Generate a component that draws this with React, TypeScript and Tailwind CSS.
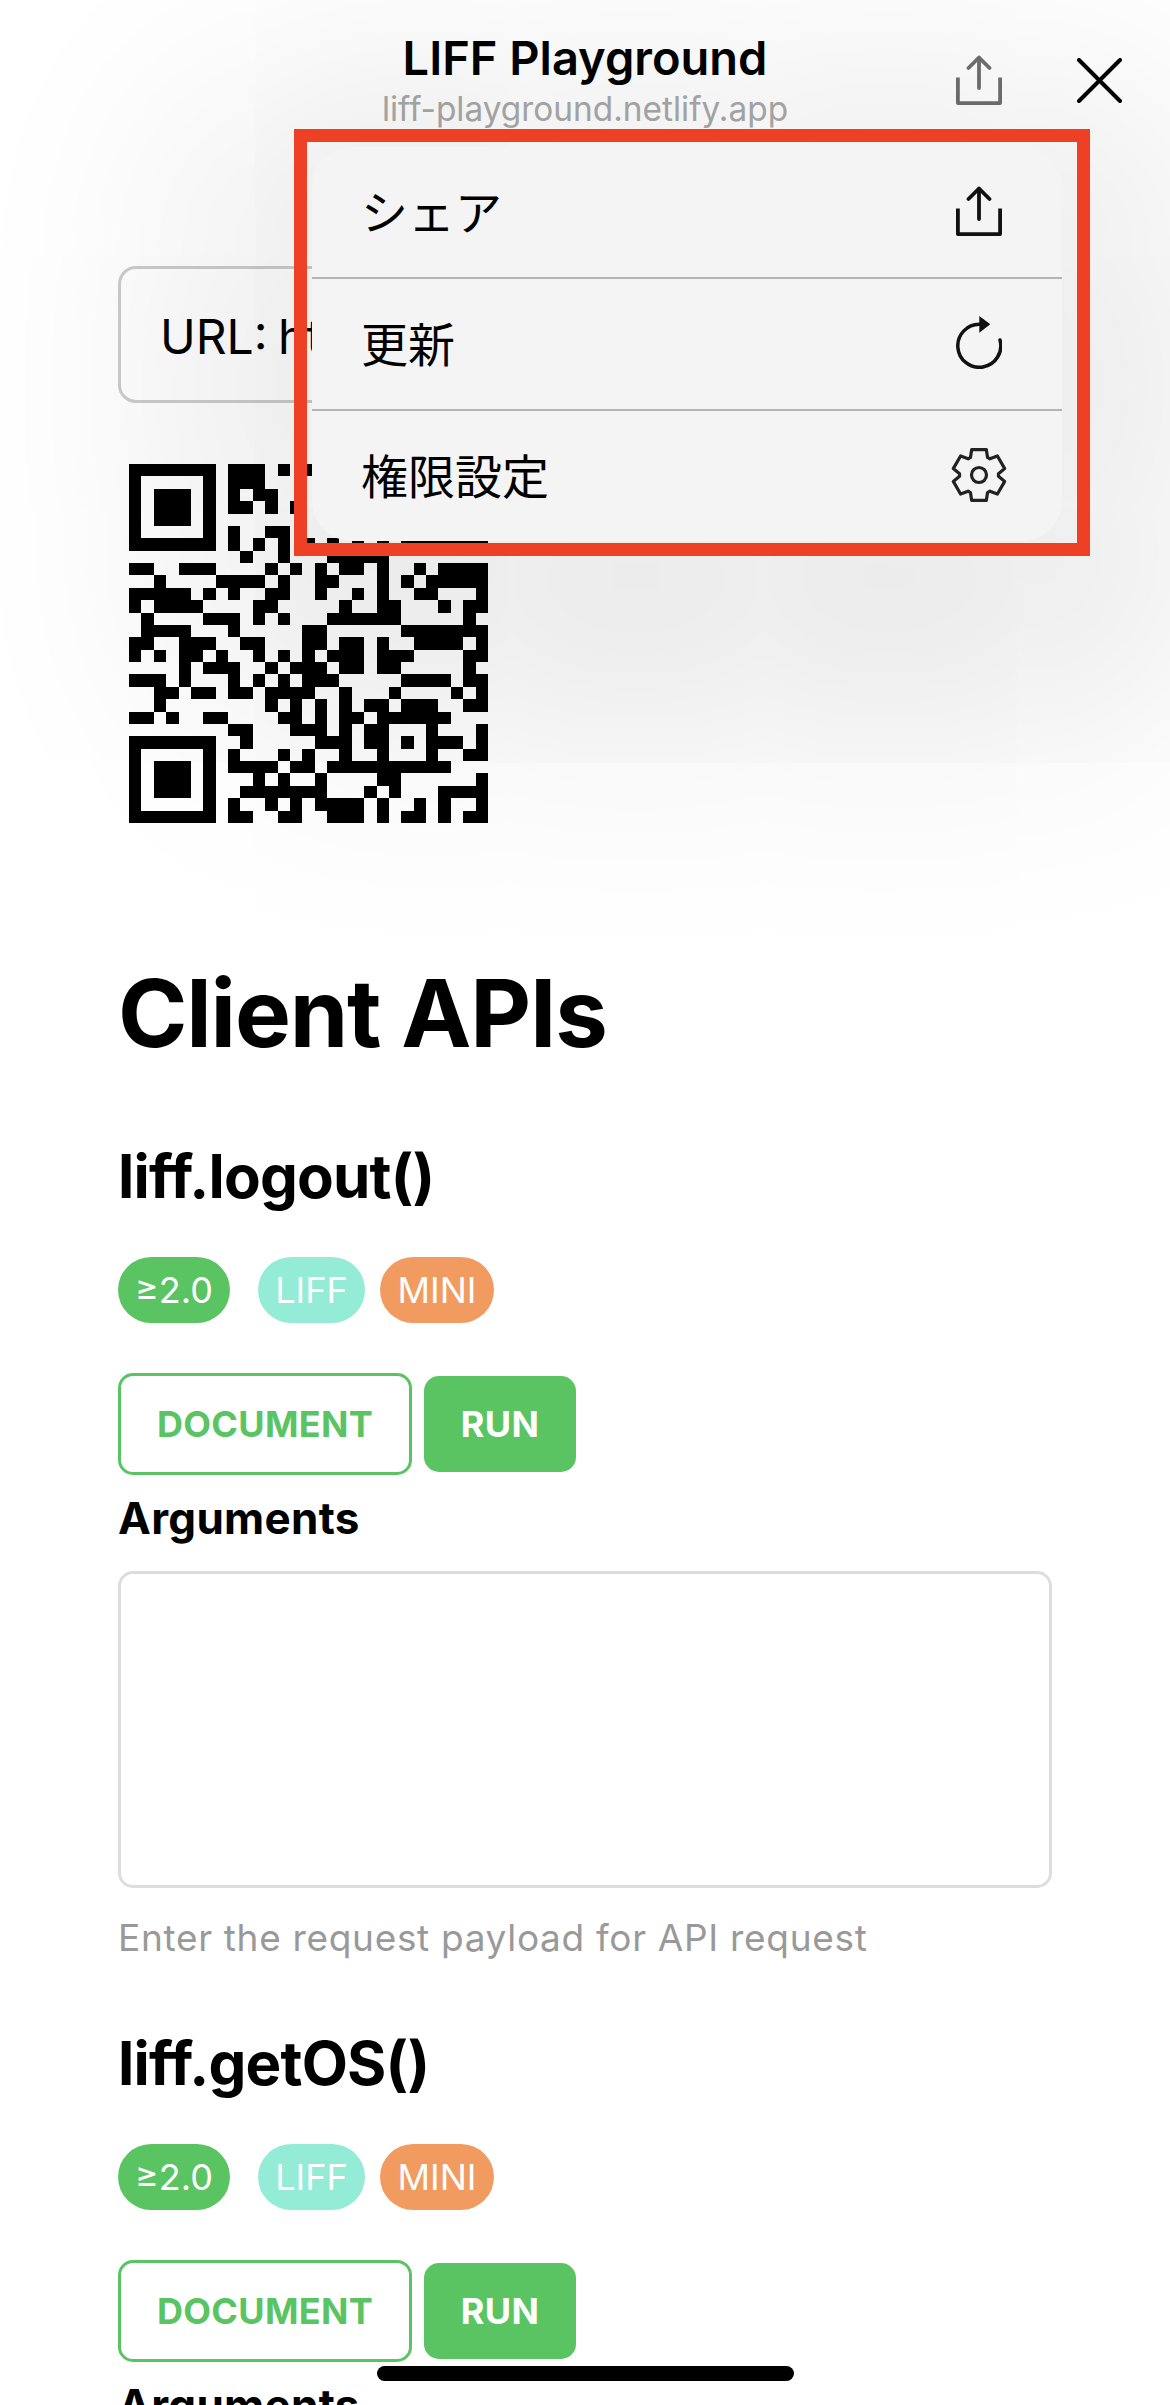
import { Fragment } from 'react';

const QR_ROWS = [
  '#######.###.#.#.......#######',
  '#.....#.###...........#.....#',
  '#.###.#.#.##..........#.###.#',
  '#.###.#.##.#.#........#.###.#',
  '#.###.#...............#.###.#',
  '#.....#.#..##.........#.....#',
  '#######.#.#.#.#.#.#.#.#######',
  '.........#..#...#####........',
  '##..###....#.#.#.##.#..#.####',
  '..#....####.#..##...#.#.#####',
  '#####.#.#..##..#..#.#..##...#',
  '#.####....##.....#..##...#.##',
  '.#....###.#.#...######.....#.',
  '.####...#.....##......#######',
  '##..###..##...##.##.#..####.#',
  '#.#.##.#..#.#.#.###.###....##',
  '....#.###..#.###.##.##.....#.',
  '###.#...#.#.#.###.....####.##',
  '..##.##.##.####..#...#....#.#',
  '..#........#.#.#.#.##.###..##',
  '##.#..##....##.#.##.######...',
  '........##...###.#.##...#...#',
  '#######..#.....###.##.#.###.#',
  '#.....#.#...#.#..#..#...#..##',
  '#.###.#.####.##.##########...',
  '#.###.#...#.#..#....##......#',
  '#.###.#..#######...#.#...####',
  '#.....#.#..#.#.####.#..#.#..#',
  '#######.##..##..###.#.##.#.##'
];

const qrPath = QR_ROWS.map((row, y) =>
  row
    .split('')
    .map((cell, x) => (cell === '#' ? `M${x} ${y}h1v1h-1z` : ''))
    .join('')
).join('');

function gearPath() {
  const point = (radius: number, degrees: number) => {
    const angle = (degrees * Math.PI) / 180;
    return `${(28 + radius * Math.cos(angle)).toFixed(2)} ${(29 + radius * Math.sin(angle)).toFixed(2)}`;
  };
  const points: string[] = [];
  for (let tooth = 0; tooth < 6; tooth++) {
    const angle = -90 + tooth * 60;
    points.push(point(19.5, angle - 26), point(26.5, angle - 16), point(26.5, angle + 16), point(19.5, angle + 26));
  }
  return `M${points.join('L')}Z`;
}

function ShareIcon({ className }: { className: string }) {
  return (
    <svg className={className} fill="none" stroke="currentColor" strokeWidth="3.8" viewBox="0 0 46 50">
      <path d="M1.9 22.5V48.1H44.1V22.5" strokeLinejoin="round" />
      <path d="M23 33V2.5M12.5 13 23 2.5 33.5 13" strokeLinecap="round" strokeLinejoin="round" />
    </svg>
  );
}

function RefreshIcon() {
  return (
    <svg className="h-[53px] w-[46px] shrink-0" fill="none" viewBox="0 0 46 53">
      <path d="M24 8.3A21.5 21.5 0 1 0 44 24" stroke="#111" strokeLinecap="round" strokeWidth="3.5" />
      <path d="M23.3 0 34.3 8.3 23.3 16.7Z" fill="#111" />
    </svg>
  );
}

function GearIcon() {
  return (
    <svg className="h-[58px] w-[56px] shrink-0" fill="none" stroke="#222" strokeWidth="3.2" viewBox="0 0 56 58">
      <path d={gearPath()} strokeLinejoin="round" />
      <circle cx="28" cy="29" r="7.5" />
    </svg>
  );
}

function ApiSection({ name, top }: { name: string; top: string }) {
  return (
    <section className={top}>
      <h2 className="text-[60px] font-bold leading-[72px] tracking-[-0.8px]">{name}</h2>
      <div className="mt-[45px] flex h-[66px] text-[36px] leading-[66px] text-white">
        <span className="w-[112px] rounded-full bg-[#5ac463] text-center">≥2.0</span>
        <span className="ml-[28px] w-[107px] rounded-full bg-[#94ecd6] text-center">LIFF</span>
        <span className="ml-[15px] w-[114px] rounded-full bg-[#f29b60] text-center">MINI</span>
      </div>
      <div className="mt-[50px] flex items-center gap-[12px] text-[36px] font-bold tracking-[0.3px]">
        <button className="h-[102px] w-[294px] rounded-[15px] border-[3.5px] border-[#5ac463] text-[#5ac463]" type="button">
          DOCUMENT
        </button>
        <button className="h-[96px] w-[152px] rounded-[15px] bg-[#5ac463] text-white" type="button">
          RUN
        </button>
      </div>
      <p className="mt-[16px] text-[44px] font-bold leading-[54px] tracking-[0.3px]">Arguments</p>
      <div className="mt-[26px] h-[317px] rounded-[15px] border-[3px] border-[#dddddd]" />
      <p className="mt-[23px] text-[37px] leading-[54px] tracking-[0.68px] text-[#999999]">
        Enter the request payload for API request
      </p>
    </section>
  );
}

const MENU_ITEMS = [
  { label: 'シェア', icon: <ShareIcon className="h-[50px] w-[46px] shrink-0 text-[#111]" /> },
  { label: '更新', icon: <RefreshIcon /> },
  { label: '権限設定', icon: <GearIcon /> }
];

export default function App() {
  return (
    <div className="relative h-[2405px] w-[1170px] overflow-hidden bg-white font-['Inter',sans-serif] text-black">
      <header className="grid h-[266px] grid-cols-[1fr_auto_1fr] items-start">
        <div />
        <div className="pt-[28px] text-center">
          <p className="text-[47px] font-semibold leading-[60px]">LIFF Playground</p>
          <p className="text-[33.4px] leading-[42px] text-[#a9a9a9]">liff-playground.netlify.app</p>
        </div>
        <div className="flex items-start justify-end gap-[75px] pr-[48px] pt-[55px]">
          <ShareIcon className="h-[50px] w-[46px] text-[#6f6f6f]" />
          <svg className="mt-[3px] h-[45px] w-[45px]" fill="none" stroke="#000" strokeLinecap="round" strokeWidth="4" viewBox="0 0 45 45">
            <path d="M2 2 43 43M43 2 2 43" />
          </svg>
        </div>
      </header>

      <main className="px-[118px]">
        <div className="flex h-[137px] items-center overflow-hidden rounded-[18px] border-[3px] border-[#cccccc] px-[39px] pt-[4px] text-[48px] whitespace-nowrap [word-spacing:-3px]">
          URL: https://liff-playground.netlify.app
        </div>
        <svg className="ml-[11px] mt-[61px] h-[359px] w-[359px]" shapeRendering="crispEdges" viewBox="0 0 29 29">
          <path d={qrPath} fill="#000" />
        </svg>
        <h1 className="mt-[130px] text-[94px] font-bold leading-[120px] tracking-[-1.2px]">Client APIs</h1>
        <ApiSection name="liff.logout()" top="mt-[67px]" />
        <ApiSection name="liff.getOS()" top="mt-[62px]" />
      </main>

      {/* menu sits on top of the page, the red box is the annotation round it */}
      <div className="absolute left-[312px] top-[147px] w-[750px] rounded-[40px] bg-[#f4f4f4] shadow-[0_70px_240px_130px_rgba(0,0,0,0.09)]">
        {MENU_ITEMS.map((item, index) => (
          <Fragment key={item.label}>
            {index > 0 && <div className="h-[2px] bg-[#b4b4b4]" />}
            <div className="flex h-[130px] items-center justify-between pb-[3px] pl-[49px] pr-[60px] font-['Noto_Sans_CJK_JP',sans-serif] text-[47px]">
              <span>{item.label}</span>
              <span className="flex w-[46px] justify-center">{item.icon}</span>
            </div>
          </Fragment>
        ))}
      </div>
      <div className="absolute left-[294px] top-[129px] h-[427px] w-[796px] border-[13px] border-[#ee4024]" />

      <div className="absolute bottom-[24px] left-[377px] h-[15px] w-[417px] rounded-full bg-black" />
    </div>
  );
}
